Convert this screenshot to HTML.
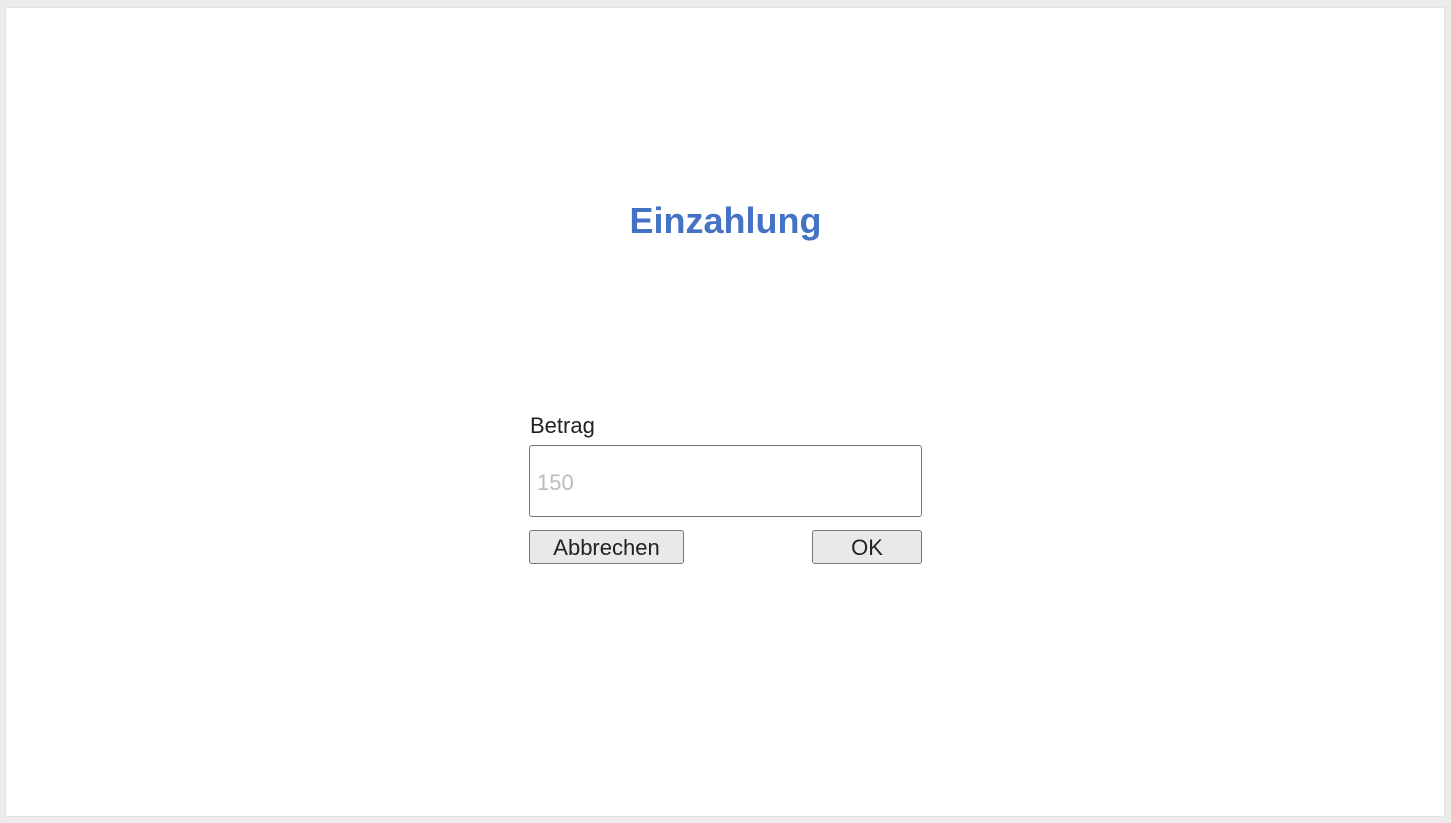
<!DOCTYPE html>
<html><head><style>
body{margin:0;background:#ececec;width:1451px;height:823px;position:relative;overflow:hidden;font-family:"Liberation Sans",sans-serif;}
.panel{position:absolute;left:5px;top:7px;width:1440px;height:810px;background:#fff;border:1px solid #e2e2e2;box-sizing:border-box;}
h1{position:absolute;left:0;width:1451px;top:199px;margin:0;text-align:center;font-size:36px;font-weight:bold;color:#4472c4;line-height:44px;}
.lbl{position:absolute;left:530px;top:412px;font-size:22px;color:#222;line-height:28px;}
.inp{position:absolute;left:529px;top:445px;width:393px;height:72px;box-sizing:border-box;border:1px solid #767676;border-radius:3px;background:#fff;}
.inp span{position:absolute;left:7px;top:24px;font-size:22px;color:#bbb;line-height:26px;}
.btn{position:absolute;top:530px;height:34px;box-sizing:border-box;border:1px solid #767676;border-radius:3px;background:#e9e9e9;font-size:22px;color:#222;text-align:center;line-height:33px;}
</style></head><body>
<div class="panel"></div>
<h1>Einzahlung</h1>
<div class="lbl">Betrag</div>
<div class="inp"><span>150</span></div>
<div class="btn" style="left:529px;width:155px;">Abbrechen</div>
<div class="btn" style="left:812px;width:110px;">OK</div>
</body></html>
